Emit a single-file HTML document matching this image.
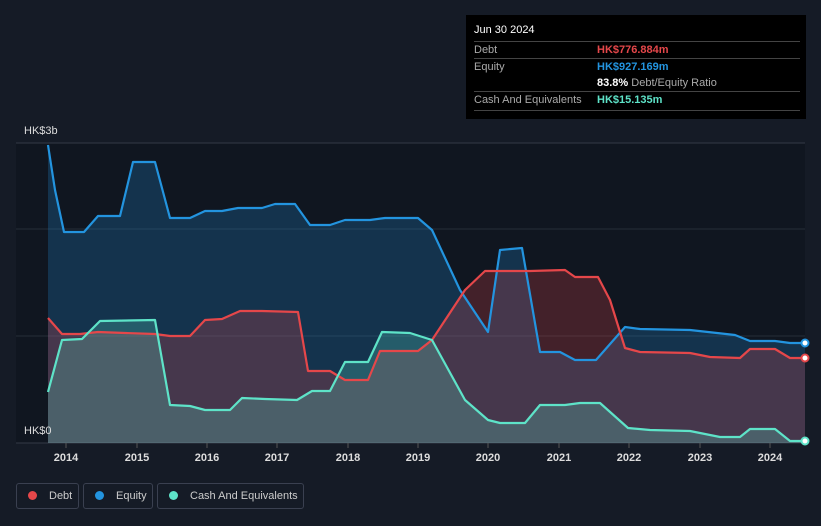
<!DOCTYPE html><html><head><style>
body{margin:0;background:#151b26;font-family:"Liberation Sans",sans-serif;width:821px;height:526px;overflow:hidden;position:relative}
.tt{position:absolute;left:466px;top:15px;width:340px;height:104px;background:#000;color:#fff;font-size:11px}
.tt .r{position:absolute;left:8px;right:6px;border-top:1px solid #444;height:17px;line-height:17px;color:#aaa}
.tt .v{position:absolute;left:123px}
.lg{position:absolute;top:483px;height:26px;border:1px solid #3a4050;border-radius:3px;color:#ccc;font-size:11px;line-height:24px;box-sizing:border-box;white-space:nowrap}
.lg i{display:inline-block;width:9px;height:9px;border-radius:50%;margin:0 12px 0 11px;vertical-align:-1px}
.ax{position:absolute;color:#ddd;font-size:11px}
</style></head><body>
<svg width="821" height="526" style="position:absolute;left:0;top:0">
<rect x="16" y="143" width="789" height="300" fill="#101620"/>
<line x1="16" y1="143" x2="805" y2="143" stroke="#333a46"/>
<line x1="16" y1="229" x2="805" y2="229" stroke="#262d38"/>
<line x1="16" y1="336" x2="805" y2="336" stroke="#262d38"/>
<line x1="16" y1="443" x2="805" y2="443" stroke="#333a46"/>
<g fill-opacity="0.24">
<path fill="#2394df" d="M48,145 L55,190 64,232 84,232 98,216 120,216 133,162 155,162 170,218 190,218 205,211 222,211 238,208 262,208 275,204 295,204 310,225 330,225 345,220 370,220 385,218 418,218 432,230 460,290 488,332 500,250 522,248 540,352 560,352 575,360 596,360 625,327 640,329 690,330 735,335 750,341 775,341 790,343 805,343 805,443 48,443Z"/>
<path fill="#e5474a" d="M48,318 L62,334 80,334 98,332 125,333 155,334 170,336 190,336 205,320 222,319 240,311 262,311 298,312 308,371 330,371 345,380 368,380 380,351 418,351 432,340 465,290 485,271 530,271 565,270 575,277 598,277 610,300 625,348 640,352 690,353 710,357 740,358 750,349 775,349 790,358 805,358 805,443 48,443Z"/>
<path fill="#5ee3c8" d="M48,392 L62,340 82,339 100,321 155,320 170,405 190,406 205,410 230,410 242,398 265,399 297,400 312,391 330,391 345,362 368,362 382,332 410,333 432,340 465,400 488,420 500,423 525,423 540,405 565,405 580,403 600,403 628,428 650,430 690,431 720,437 740,437 750,429 775,429 790,441 805,441 805,443 48,443Z"/>
</g>
<g fill="none" stroke-width="2.2" stroke-linejoin="round">
<path stroke="#2394df" d="M48,145 L55,190 64,232 84,232 98,216 120,216 133,162 155,162 170,218 190,218 205,211 222,211 238,208 262,208 275,204 295,204 310,225 330,225 345,220 370,220 385,218 418,218 432,230 460,290 488,332 500,250 522,248 540,352 560,352 575,360 596,360 625,327 640,329 690,330 735,335 750,341 775,341 790,343 805,343"/>
<path stroke="#e5474a" d="M48,318 L62,334 80,334 98,332 125,333 155,334 170,336 190,336 205,320 222,319 240,311 262,311 298,312 308,371 330,371 345,380 368,380 380,351 418,351 432,340 465,290 485,271 530,271 565,270 575,277 598,277 610,300 625,348 640,352 690,353 710,357 740,358 750,349 775,349 790,358 805,358"/>
<path stroke="#5ee3c8" d="M48,392 L62,340 82,339 100,321 155,320 170,405 190,406 205,410 230,410 242,398 265,399 297,400 312,391 330,391 345,362 368,362 382,332 410,333 432,340 465,400 488,420 500,423 525,423 540,405 565,405 580,403 600,403 628,428 650,430 690,431 720,437 740,437 750,429 775,429 790,441 805,441"/>
</g>
<circle cx="805" cy="343" r="3.5" fill="#fff" stroke="#2394df" stroke-width="2"/>
<circle cx="805" cy="358" r="3.5" fill="#fff" stroke="#e5474a" stroke-width="2"/>
<circle cx="805" cy="441" r="3.5" fill="#fff" stroke="#5ee3c8" stroke-width="2"/>
<g stroke="#555" stroke-width="1">
<path d="M66,443v5M137,443v5M207,443v5M277,443v5M348,443v5M418,443v5M488,443v5M559,443v5M629,443v5M700,443v5M770,443v5"/></g>
<g fill="#ddd" font-size="11" font-weight="bold" text-anchor="middle" font-family="Liberation Sans">
<text x="66" y="461">2014</text><text x="137" y="461">2015</text><text x="207" y="461">2016</text><text x="277" y="461">2017</text><text x="348" y="461">2018</text><text x="418" y="461">2019</text><text x="488" y="461">2020</text><text x="559" y="461">2021</text><text x="629" y="461">2022</text><text x="700" y="461">2023</text><text x="770" y="461">2024</text></g>
</svg>
<div class="ax" style="left:24px;top:125px">HK$3b</div>
<div class="ax" style="left:24px;top:425px">HK$0</div>
<div class="tt">
<div style="position:absolute;left:8px;top:9px;font-size:11px">Jun 30 2024</div>
<div class="r" style="top:26px">Debt<span class="v" style="color:#e5474a;font-weight:bold">HK$776.884m</span></div>
<div class="r" style="top:43px">Equity<span class="v" style="color:#2394df;font-weight:bold">HK$927.169m</span></div>
<div class="r" style="top:60px;border-top:none"><span class="v"><b style="color:#fff">83.8%</b> Debt/Equity Ratio</span></div>
<div class="r" style="top:76px">Cash And Equivalents<span class="v" style="color:#5ee3c8;font-weight:bold">HK$15.135m</span></div>
<div class="r" style="top:95px;height:0"></div>
</div>
<div class="lg" style="left:16px;width:63px"><i style="background:#e5474a"></i>Debt</div>
<div class="lg" style="left:83px;width:70px"><i style="background:#2394df"></i>Equity</div>
<div class="lg" style="left:157px;width:147px"><i style="background:#5ee3c8"></i>Cash And Equivalents</div>
</body></html>
